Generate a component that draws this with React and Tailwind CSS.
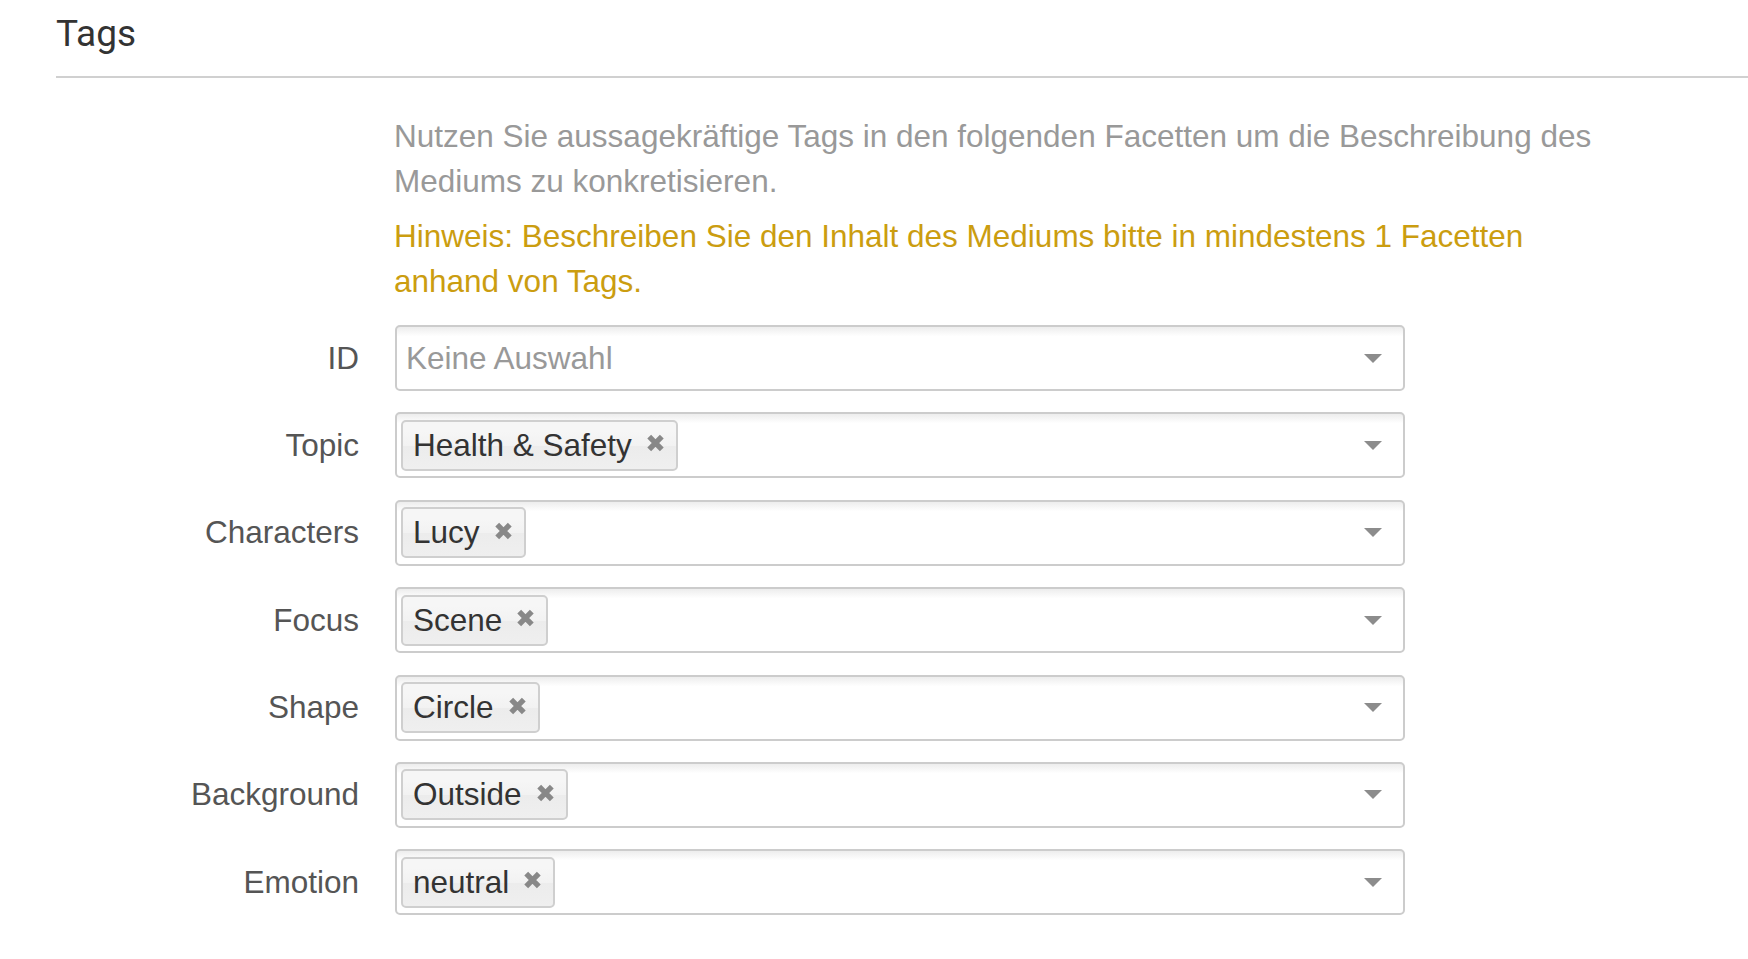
import React from "react";

function CloseIcon() {
  return (
    <svg width="19" height="18" viewBox="0 0 16 16" className="mb-[4px] shrink-0">
      <path d="M2.4 2.4 L13.6 13.6 M13.6 2.4 L2.4 13.6" stroke="#888888" strokeWidth="4.8" fill="none" />
    </svg>
  );
}

function Arrow() {
  return (
    <svg width="18" height="9" viewBox="0 0 18 9" className="shrink-0">
      <path d="M0 0 L18 0 L9 9 Z" fill="#8c8c8c" />
    </svg>
  );
}

function Chip({ label }) {
  return (
    <div className="flex h-[51px] items-center rounded-[5px] border-2 border-[#cfcfcf] bg-[linear-gradient(#f6f6f6_20%,#f2f2f2_50%,#ececec_52%,#efefef)] pl-[10px] pr-[11px] text-[#333]">
      <span>{label}</span>
      <span className="ml-[14px] flex items-center">
        <CloseIcon />
      </span>
    </div>
  );
}

function Row({ label, value }) {
  return (
    <div className="flex h-[66px] items-center">
      <div className="w-[303px] text-right text-[#555]">{label}</div>
      <div className="ml-[36px] flex h-[66px] w-[1010px] items-center justify-between rounded-[5px] border-2 border-[#cccccc] bg-[linear-gradient(#eeeeee_1%,#ffffff_15%)] pl-[4px] pr-[21px]">
        {value ? (
          <Chip label={value} />
        ) : (
          <span className="ml-[5px] text-[#999]">Keine Auswahl</span>
        )}
        <Arrow />
      </div>
    </div>
  );
}

export default function App() {
  const rows = [
    ["ID", null],
    ["Topic", "Health & Safety"],
    ["Characters", "Lucy"],
    ["Focus", "Scene"],
    ["Shape", "Circle"],
    ["Background", "Outside"],
    ["Emotion", "neutral"],
  ];
  return (
    <div className="min-h-[959px] w-full bg-white pl-[56px] font-['Liberation_Sans',Arial,sans-serif] text-[31.5px] leading-[45px]">
      <div className="border-b-2 border-[#d0d0d0] pt-[7px] pb-[15px]">
        <h2 className="font-['Roboto',sans-serif] text-[37px] leading-[54px] text-[#333]">Tags</h2>
      </div>
      <div className="pt-[36px]">
        <div className="ml-[338px] w-[1215px]">
          <p className="text-[#999]">
            Nutzen Sie aussagekräftige Tags in den folgenden Facetten um die Beschreibung des Mediums zu konkretisieren.
          </p>
          <p className="mt-[10px] text-[#cb9d10]">
            Hinweis: Beschreiben Sie den Inhalt des Mediums bitte in mindestens 1 Facetten anhand von Tags.
          </p>
        </div>
        <div className="mt-[21px] flex flex-col gap-[21.4px]">
          {rows.map(([l, v]) => (
            <Row key={l} label={l} value={v} />
          ))}
        </div>
      </div>
    </div>
  );
}
